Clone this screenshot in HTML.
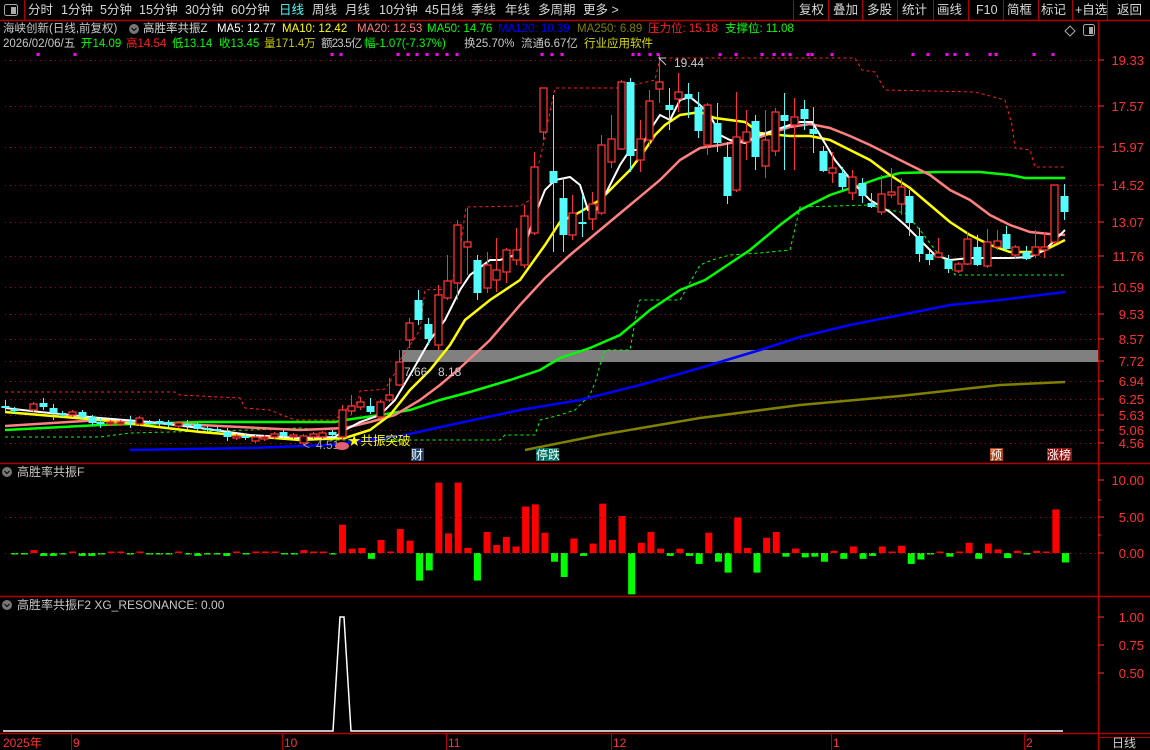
<!DOCTYPE html>
<html><head><meta charset="utf-8">
<style>
html,body{margin:0;padding:0;background:#000;}
body{width:1150px;height:750px;overflow:hidden;position:relative;font-family:"Liberation Sans","Noto Sans CJK SC",sans-serif;}
.t{position:absolute;white-space:nowrap;font-size:11.5px;line-height:14px;}
.tb{position:absolute;top:3px;font-size:12.5px;line-height:14px;color:#d8d8d8;white-space:nowrap;}
svg{position:absolute;left:0;top:0;}
</style></head><body>
<svg width="1150" height="750" xmlns="http://www.w3.org/2000/svg" id="s">
<line x1="0" y1="20.5" x2="1150" y2="20.5" stroke="#b00000" stroke-width="1.5"/>
<line x1="24.5" y1="0" x2="24.5" y2="20" stroke="#b00000"/>
<g stroke="#b00000">
<line x1="793.5" y1="0" x2="793.5" y2="20"/><line x1="828.5" y1="0" x2="828.5" y2="20"/>
<line x1="862.5" y1="0" x2="862.5" y2="20"/><line x1="897.5" y1="0" x2="897.5" y2="20"/>
<line x1="933.5" y1="0" x2="933.5" y2="20"/><line x1="968.5" y1="0" x2="968.5" y2="20"/>
<line x1="1003.5" y1="0" x2="1003.5" y2="20"/><line x1="1038.5" y1="0" x2="1038.5" y2="20"/>
<line x1="1072.5" y1="0" x2="1072.5" y2="20"/><line x1="1107.5" y1="0" x2="1107.5" y2="20"/>
</g>
<line x1="1098.5" y1="20" x2="1098.5" y2="750" stroke="#b00000" stroke-width="1.5"/>
<line x1="0" y1="463.5" x2="1150" y2="463.5" stroke="#b00000" stroke-width="1.5"/>
<line x1="0" y1="596.5" x2="1150" y2="596.5" stroke="#b00000" stroke-width="1.5"/>
<line x1="0" y1="733.5" x2="1150" y2="733.5" stroke="#b00000" stroke-width="1.5"/>
<line x1="1098" y1="737.5" x2="1150" y2="737.5" stroke="#b00000"/>
<g stroke="#a00000" stroke-dasharray="1,4" id="grid"></g>
<rect x="402" y="350" width="696" height="12" fill="#808080"/>
<g id="lines" fill="none"></g>
<g id="cand"></g>
<g id="bars"></g>
<g fill="#ff3232" font-size="13" text-anchor="end" font-family="Liberation Sans,sans-serif" id="plab"></g>
<g fill="#ff3232" font-size="13" text-anchor="end" font-family="Liberation Sans,sans-serif">
<text x="1144" y="485">10.00</text><text x="1144" y="522">5.00</text><text x="1144" y="558">0.00</text>
<text x="1144" y="622">1.00</text><text x="1144" y="650">0.75</text><text x="1144" y="678">0.50</text>
</g>
<g stroke="#ff3232"><line x1="1098" y1="480" x2="1104" y2="480"/><line x1="1098" y1="500" x2="1101" y2="500"/><line x1="1098" y1="517" x2="1104" y2="517"/><line x1="1098" y1="535" x2="1101" y2="535"/><line x1="1098" y1="553" x2="1104" y2="553"/>
<line x1="1098" y1="617" x2="1104" y2="617"/><line x1="1098" y1="645" x2="1104" y2="645"/><line x1="1098" y1="673" x2="1104" y2="673"/></g>
<g stroke="#a00000" stroke-dasharray="1,4"><line x1="5" y1="517.5" x2="1098" y2="517.5"/><line x1="5" y1="553.5" x2="1098" y2="553.5"/></g>
<polyline points="3,731 333,731 340,617 344,617 351,731 1063,731" fill="none" stroke="#fff" stroke-width="1.5"/>
<g stroke="#b00000"><line x1="71.5" y1="734" x2="71.5" y2="750"/><line x1="282.5" y1="734" x2="282.5" y2="750"/><line x1="446.5" y1="734" x2="446.5" y2="750"/><line x1="611.5" y1="734" x2="611.5" y2="750"/><line x1="831.5" y1="734" x2="831.5" y2="750"/><line x1="1024.5" y1="734" x2="1024.5" y2="750"/></g>
<g fill="#ff3232" font-size="12" font-family="Liberation Sans,Noto Sans CJK SC,sans-serif">
<text x="3" y="747">2025年</text><text x="73" y="747">9</text><text x="284" y="747">10</text><text x="448" y="747">11</text><text x="613" y="747">12</text><text x="833" y="747">1</text><text x="1026" y="747">2</text></g>
<text x="1112" y="747" fill="#d0d0d0" font-size="12" font-family="Liberation Sans,Noto Sans CJK SC,sans-serif">日线</text>
<g font-family="Liberation Sans,Noto Sans CJK SC,sans-serif" font-size="12">
<polyline points="666,65 659,58 666,58" fill="none" stroke="#ccc"/>
<text x="674" y="67" fill="#ccc">19.44</text>
<text x="404" y="376" fill="#ccc">7.66</text><text x="438" y="376" fill="#ccc">8.18</text>
<text x="303" y="449" fill="#aaa">&lt;</text><text x="316" y="449" fill="#aaa">4.51</text>
<ellipse cx="342" cy="446" rx="7" ry="4" fill="#e06070"/>
<text x="348" y="445" fill="#ffff00" font-size="12.5">★共振突破</text>
<rect x="411" y="448" width="13" height="13" fill="#1d3f6a"/><text x="411" y="459" fill="#fff">财</text>
<rect x="536" y="448" width="23" height="13" fill="#007060"/><text x="536" y="459" fill="#fff">停跌</text>
<rect x="990" y="448" width="13" height="13" fill="#b04010"/><text x="990" y="459" fill="#fff">预</text>
<rect x="1047" y="448" width="25" height="13" fill="#901010"/><text x="1047" y="459" fill="#fff">涨榜</text>
</g>
<path d="M1070 26 L1075 31 L1070 36 L1065 31 Z" fill="none" stroke="#aaa"/>
<rect x="1083.5" y="24.5" width="11" height="11" rx="2" fill="none" stroke="#aaa"/><rect x="1089" y="27" width="4" height="7" fill="#aaa"/>
<rect x="4.5" y="4.5" width="13" height="11" rx="2" fill="none" stroke="#aaa"/><rect x="11" y="7" width="5" height="7" fill="#aaa"/>
<circle cx="134" cy="29" r="5" fill="#777"/><path d="M131.5 28 L134 30.5 L136.5 28" stroke="#000" fill="none"/>
<circle cx="7" cy="472" r="5" fill="#777"/><path d="M4.5 471 L7 473.5 L9.5 471" stroke="#000" fill="none"/>
<circle cx="7" cy="605" r="5" fill="#777"/><path d="M4.5 604 L7 606.5 L9.5 604" stroke="#000" fill="none"/>
<g fill="#ff00ff" id="dots"></g>
</svg>

<div class="tb" style="left:28px">分时</div><div class="tb" style="left:61px">1分钟</div><div class="tb" style="left:100px">5分钟</div>
<div class="tb" style="left:139px">15分钟</div><div class="tb" style="left:185px">30分钟</div><div class="tb" style="left:231px">60分钟</div>
<div class="tb" style="left:279px;color:#54fcfc">日线</div><div class="tb" style="left:312px">周线</div><div class="tb" style="left:345px">月线</div>
<div class="tb" style="left:379px">10分钟</div><div class="tb" style="left:425px">45日线</div><div class="tb" style="left:471px">季线</div>
<div class="tb" style="left:505px">年线</div><div class="tb" style="left:538px">多周期</div><div class="tb" style="left:583px">更多 &gt;</div>
<div class="tb" style="left:799px">复权</div><div class="tb" style="left:833px">叠加</div><div class="tb" style="left:867px">多股</div>
<div class="tb" style="left:902px">统计</div><div class="tb" style="left:937px">画线</div><div class="tb" style="left:976px">F10</div>
<div class="tb" style="left:1007px">简框</div><div class="tb" style="left:1041px">标记</div><div class="tb" style="left:1075px">+自选</div><div class="tb" style="left:1117px">返回</div>

<div class="t" style="left:3px;top:22px;color:#c8c8c8">海峡创新(日线,前复权)</div>
<div class="t" style="left:143px;top:22px;color:#d8d8d8">高胜率共振Z</div>
<div class="t" style="left:217px;top:22px;color:#fff">MA5: 12.77</div>
<div class="t" style="left:282px;top:22px;color:#ffff00">MA10: 12.42</div>
<div class="t" style="left:357px;top:22px;color:#ff8080">MA20: 12.53</div>
<div class="t" style="left:427px;top:22px;color:#00ff00">MA50: 14.76</div>
<div class="t" style="left:498px;top:22px;color:#0000ff">MA120: 10.39</div>
<div class="t" style="left:577px;top:22px;color:#808000">MA250: 6.89</div>
<div class="t" style="left:648px;top:22px;color:#ff2020">压力位: 15.18</div>
<div class="t" style="left:725px;top:22px;color:#00ff00">支撑位: 11.08</div>
<div class="t" style="left:3px;top:37px;color:#c8c8c8">2026/02/06/五</div>
<div class="t" style="left:81px;top:37px;color:#00ff00">开14.09</div>
<div class="t" style="left:126px;top:37px;color:#ff2020">高14.54</div>
<div class="t" style="left:172px;top:37px;color:#00ff00">低13.14</div>
<div class="t" style="left:219px;top:37px;color:#00ff00">收13.45</div>
<div class="t" style="left:264px;top:37px;color:#c8c800">量171.4万</div>
<div class="t" style="left:321px;top:37px;color:#c8c8c8;letter-spacing:-0.8px">额23.5亿</div>
<div class="t" style="left:364px;top:37px;color:#00ff00">幅-1.07(-7.37%)</div>
<div class="t" style="left:464px;top:37px;color:#c8c8c8">换25.70%</div>
<div class="t" style="left:521px;top:37px;color:#c8c8c8">流通6.67亿</div>
<div class="t" style="left:584px;top:37px;color:#d8d800">行业应用软件</div>
<div class="t" style="left:17px;top:465px;color:#c8c8c8;font-size:12px">高胜率共振F</div>
<div class="t" style="left:17px;top:598px;color:#c8c8c8;font-size:12px">高胜率共振F2 XG_RESONANCE: 0.00</div>

<script>
var NS="http://www.w3.org/2000/svg";
function el(p,t,a){var e=document.createElementNS(NS,t);for(var k in a)e.setAttribute(k,a[k]);p.appendChild(e);return e;}
var grid=document.getElementById('grid'),plab=document.getElementById('plab');
var P=[[19.33,60],[17.57,106],[15.97,147],[14.52,185],[13.07,222],[11.76,256],[10.59,287],[9.53,314],[8.57,339],[7.72,361],[6.94,381],[6.25,399],[5.63,415],[5.06,430],[4.56,443]];
P.forEach(function(p){el(grid,'line',{x1:5,y1:p[1]+.5,x2:1098,y2:p[1]+.5});
 el(document.getElementById('s'),'line',{x1:1098,y1:p[1],x2:1104,y2:p[1],stroke:'#ff3232'});
 var t=el(plab,'text',{x:1144,y:p[1]+5});t.textContent=p[0].toFixed(2);});
var L=document.getElementById('lines');
function pl(pts,c,w,d){var a={points:pts,stroke:c,'stroke-width':w||2,fill:'none'};if(d)a['stroke-dasharray']=d;el(L,'polyline',a);}
pl("5,392 175,392 180,395 240,398 245,408 270,410 290,418 295,420 335,420 340,415 345,410 358,402 360,391 375,390 385,389 395,373 400,360 410,345 420,330 425,290 450,289 460,250 466,207 520,206 530,200 542,150 555,88 620,88 655,80 660,58 855,58 862,70 875,72 885,90 975,92 1005,100 1012,125 1015,148 1030,150 1035,167 1065,167","#ff2020",1,"3,3");
pl("5,437 100,437 130,433 250,430 300,428 320,430 330,440 500,440 505,435 535,435 540,420 560,415 575,410 580,405 590,395 596,380 600,365 605,350 630,350 638,305 640,300 680,300 700,265 712,260 730,255 760,253 790,250 800,207 870,205 880,208 905,213 920,230 935,250 950,265 955,275 1065,275","#00ff00",1,"3,3");
pl("525,450 600,435 700,418 800,405 900,396 1000,385 1065,382","#808000",2.5);
pl("130,450 250,448 330,445 400,436 450,425 520,410 580,400 640,385 700,368 760,350 800,337 850,325 900,315 950,305 1000,300 1065,292","#0000ff",2.5);
pl("5,430 100,425 200,422 300,422 335,422 345,420 380,415 410,410 440,400 470,392 510,380 540,370 560,358 590,348 620,335 650,310 680,290 705,280 720,270 750,250 780,225 800,210 830,195 860,185 880,178 900,173 940,172 980,172 1010,175 1025,178 1065,178","#00ff00",2.5);
pl("5,426 100,420 200,425 300,430 345,428 370,422 395,415 420,400 440,385 460,368 490,340 520,305 545,278 570,255 600,230 630,205 660,180 680,160 700,148 720,145 740,141 760,137 790,127 810,124 830,128 850,136 870,145 890,155 910,165 930,175 950,190 970,200 990,215 1010,225 1030,232 1050,234 1065,235","#ff8080",2.5);
pl("5,412 100,420 200,432 300,440 345,438 370,430 390,415 410,390 430,370 450,345 465,320 490,300 520,280 545,245 560,222 580,212 600,200 620,180 630,170 645,150 655,135 665,125 680,115 700,112 715,118 730,120 745,122 760,133 790,136 810,136 830,140 850,150 870,160 890,175 910,188 930,205 950,222 970,235 990,245 1010,252 1030,252 1045,250 1065,240","#ffff00",2.5);
pl("5,408 40,412 100,418 150,422 200,428 250,435 300,438 335,437 345,430 360,422 380,415 395,400 410,375 430,340 445,320 460,290 470,275 490,260 500,260 515,255 525,245 535,215 545,190 555,180 570,177 580,185 588,210 595,212 605,195 620,165 630,150 640,150 650,130 660,115 670,120 680,100 690,97 700,105 710,115 720,135 730,140 745,143 760,135 775,130 790,125 800,122 812,122 820,135 835,160 855,185 870,200 890,212 905,225 920,240 935,255 950,260 970,258 990,258 1010,258 1030,257 1045,250 1065,230","#ffffff",2);
var C=[[5,406,408,0,400,412],[14,409,411,0],[33,404,410,1],[43,403,407,0,398,410],[53,408,413,0,404,420],[62,413,415,0],[72,412,415,1],[82,412,417,0],[92,417,423,0],[100,422,424,0,418,428],[110,422,424,1],[120,422,424,1],[130,421,423,0,416,428],[139,418,424,1],[149,422,424,0],[159,421,424,0],[168,422,425,0],[178,423,426,1],[187,424,426,0,420,430],[197,424,429,0],[207,428,430,0],[217,429,431,0],[227,432,437,0,428,441],[236,436,438,1],[245,436,438,0],[255,437,441,1],[264,437,439,1],[274,434,437,1],[283,432,436,0],[293,435,437,1],[303,436,443,1],[313,434,437,1],[322,433,437,1],[332,432,435,0],
[342,410,437,1,405,440],[351,406,411,1,395,415],[360,402,407,1,397,410],[370,406,412,0,398,414],[380,402,417,1],[389,395,400,1,378,402],[399,362,385,1,350,386],[409,323,340,1,318,348],[418,300,320,0,290,325],[428,324,339,0,318,345],[438,295,345,1,285,350],[447,281,298,1,255,300],[457,225,283,1,220,300],[467,242,247,1,208,275],[477,260,293,0,255,300],[487,265,288,1,252,293],[496,270,280,1,238,292],[506,250,272,1,248,283],[516,250,260,1,228,265],[524,216,265,1,205,268],[534,167,233,1,152,235],[543,88,132,1,88,140],[553,171,183,0,95,252],[563,198,235,0,178,252],[572,213,235,1,195,240],[582,222,224,0,195,237],[592,204,219,1,192,230],[601,145,213,1,135,215],[611,139,162,1,115,168],[621,82,149,1,80,150],[630,82,156,0,78,172],[640,139,160,1,120,172],[649,101,140,1,90,145],[659,82,89,1,55,103],[669,105,110,0,88,130],[678,92,99,1,73,112],[688,94,99,0,83,118],[698,107,131,0,92,138],
[707,105,145,1,103,155],[717,123,143,0,103,152],[727,157,196,0,142,204],[736,137,190,1,92,192],[746,132,142,1,110,160],[755,121,157,0,115,170],[765,140,166,1,110,178],[775,112,151,1,108,156],[784,115,121,0,93,170],[794,117,125,1,98,170],[804,109,119,0,100,130],[813,129,134,0,107,153],[823,151,171,0,146,172],[832,168,173,1,152,183],[842,173,187,0,167,190],[852,177,193,1,170,200],[862,183,196,0,178,203],[871,203,207,0,193,208],[881,194,212,1,175,215],[891,192,195,1,168,198],[901,187,204,1,178,215],[909,196,223,0,190,236],[919,236,254,0,228,262],[929,254,260,0,250,265],[938,253,257,1,238,258],[948,260,269,0,255,273],[958,264,271,1,262,273],[967,239,264,1,232,265],[977,247,265,0,235,266],[987,242,266,1,229,268],[997,241,247,1,230,250],[1006,234,249,0,226,250],[1015,247,255,1,245,258],[1026,252,259,0,246,260],[1035,247,255,1,230,258],[1044,247,250,1,232,258],[1054,185,242,1,185,244],[1064,196,212,0,184,220]];
var G=document.getElementById('cand');
C.forEach(function(c){var x=c[0],t=c[1],b=c[2],r=c[3],hi=c[4]||t-2,lo=c[5]||b+2;var col=r?'#ff3232':'#54fcfc';
 el(G,'line',{x1:x+.5,y1:hi,x2:x+.5,y2:t,stroke:col});el(G,'line',{x1:x+.5,y1:b,x2:x+.5,y2:lo,stroke:col});
 if(r)el(G,'rect',{x:x-3,y:t,width:7,height:Math.max(b-t,1),fill:'#000',stroke:col,'stroke-width':1.3});
 else el(G,'rect',{x:x-3.5,y:t,width:8,height:Math.max(b-t,1.5),fill:col});});
var V=[-.1,-.1,.4,-.4,-.4,-.2,.2,-.4,-.4,-.1,.1,.1,-.1,.2,-.1,-.2,-.1,.2,-.1,-.4,-.1,-.1,-.4,.1,-.1,.2,.1,.2,-.2,-.1,.4,.1,.2,-.1,
3.9,.6,.7,-.8,1.8,.2,3.3,1.7,-3.8,-2.4,9.7,2.7,9.7,.7,-3.8,2.9,1.1,2.2,.9,6.4,6.7,2.8,-1.2,-3.3,2.0,
-.4,1.3,6.8,1.8,5.1,-5.7,1.4,2.9,.6,-.4,.6,-.4,-1.5,2.8,-1.2,-2.7,4.9,.7,-2.7,2.1,2.9,-.5,.6,-.6,-.5,-1.2,.3,-.8,.9,-.8,-.4,.9,.2,1.0,-1.5,-.9,-.2,.2,-.5,.2,1.4,-.8,1.3,.5,-.7,.3,-.2,.3,.2,6.0,-1.3];
var B=document.getElementById('bars');
V.forEach(function(v,i){var x=14.7+i*9.64;var h=Math.abs(v)*7.26;if(h<1.5)h=1.5;
 el(B,'rect',{x:x-3.5,y:v>=0?553-h:553,width:7,height:h,fill:v>=0?'#ff0000':'#00ff00'});});
var D=document.getElementById('dots');
[38,75,332,341,398,408,417,427,437,447,457,542,552,562,633,639,650,658,720,736,762,774,783,790,808,812,832,913,928,947,955,967,990,996,1034,1053].forEach(function(x){el(D,'rect',{x:x-1.5,y:53,width:3,height:3});});
</script>
</body></html>
